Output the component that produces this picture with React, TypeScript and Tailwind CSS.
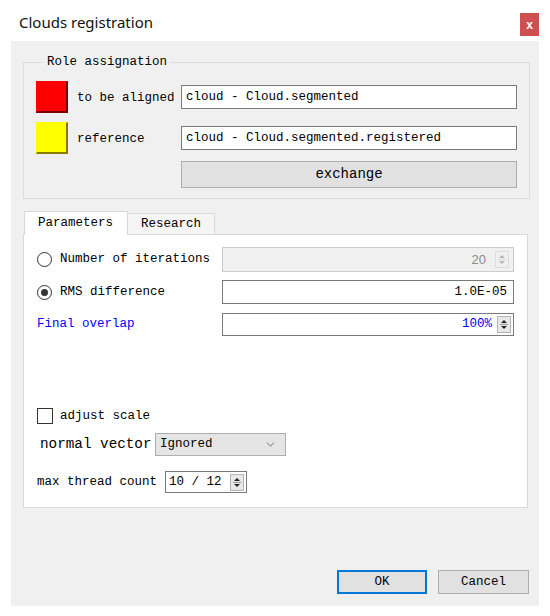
import { ChevronDown } from 'lucide-react';

const mono = "font-['Liberation_Mono',monospace] text-[12.5px]";

function SpinArrows({ disabled }: { disabled?: boolean }) {
  const c = disabled ? '#b5b5b5' : '#222';
  return (
    <div
      className={`flex h-[17px] w-[14px] flex-col items-center justify-center border ${
        disabled ? 'border-[#dcdcdc] bg-[#f0f0f0]' : 'border-[#b5b5b5] bg-[#e8e8e8]'
      }`}
    >
      <svg width="8" height="13" viewBox="0 0 8 13">
        <path d="M1 5 L4 2 L7 5 Z" fill={c} />
        <line x1="0" y1="6.5" x2="8" y2="6.5" stroke={disabled ? '#d8d8d8' : '#9a9a9a'} />
        <path d="M1 8 L4 11 L7 8 Z" fill={c} />
      </svg>
    </div>
  );
}

function ColorSwatch({ color, dark }: { color: string; dark: string }) {
  return (
    <div
      className="h-[32px] w-[32px] border-b-2 border-r-2 border-l border-t"
      style={{ background: color, borderBottomColor: dark, borderRightColor: dark, borderTopColor: color, borderLeftColor: color }}
    />
  );
}

function Radio({ checked }: { checked?: boolean }) {
  return (
    <div className="flex h-[15px] w-[15px] items-center justify-center rounded-full border border-[#333] bg-white">
      {checked && <div className="h-[7px] w-[7px] rounded-full bg-[#333]" />}
    </div>
  );
}

export default function App() {
  return (
    <div className={`flex h-[616px] w-[550px] flex-col bg-white ${mono} text-black`}>
      {/* title bar */}
      <div className="flex h-[41px] items-start">
        <div className="ml-[19px] mt-[12px] font-['Noto_Sans',sans-serif] text-[15px] leading-[20px] text-[#111]">
          Clouds registration
        </div>
        <div className="ml-auto mr-[11px] mt-[13px] flex h-[23px] w-[19px] items-center justify-center bg-[#cd4f4f] font-['Liberation_Sans',sans-serif] text-[12px] font-bold text-white">
          x
        </div>
      </div>

      {/* body */}
      <div className="ml-[11px] flex h-[565px] w-[528px] flex-col bg-[#f0f0f0] pl-[12px] pr-[9px] pt-[13px]">
        <fieldset className="border border-[#dcdcdc] px-[12px] pb-[10px]">
          <legend className="ml-[8px] px-[3px] leading-[16px]">Role assignation</legend>
          <div className="mt-[11px] flex h-[32px] items-center">
            <ColorSwatch color="#ff0000" dark="#7a0000" />
            <div className="ml-[9px] w-[104px] pt-[2px]">to be aligned</div>
            <div className="flex h-[24px] flex-1 items-center border border-[#7a7a7a] bg-white pl-[4px]">
              cloud - Cloud.segmented
            </div>
          </div>
          <div className="mt-[9px] flex h-[32px] items-center">
            <ColorSwatch color="#ffff00" dark="#8a7a00" />
            <div className="ml-[9px] w-[104px] pt-[2px]">reference</div>
            <div className="flex h-[24px] flex-1 items-center border border-[#7a7a7a] bg-white pl-[4px]">
              cloud - Cloud.segmented.registered
            </div>
          </div>
          <div className="mt-[7px] flex">
            <div className="ml-[145px] flex h-[27px] flex-1 items-center justify-center border border-[#adadad] bg-[#e1e1e1] text-[14px]">
              exchange
            </div>
          </div>
        </fieldset>

        {/* tabs */}
        <div className="mt-[11px] flex h-[24px] items-end pl-[1px]">
          <div className="relative z-10 -mb-px flex h-[24px] w-[104px] items-center border border-b-0 border-[#d9d9d9] bg-white pl-[13px]">
            Parameters
          </div>
          <div className="flex h-[21px] w-[87px] items-center border border-l-0 border-b-0 border-[#d9d9d9] bg-[#f5f5f5] pl-[13px]">
            Research
          </div>
        </div>
        <div className="mr-[2px] flex h-[274px] flex-col border border-[#d9d9d9] bg-white pr-[13px] pt-[12px]">
          <div className="flex h-[25px] items-center">
            <div className="ml-[13px]">
              <Radio />
            </div>
            <div className="ml-[8px] w-[162px]">Number of iterations</div>
            <div className="flex h-[25px] flex-1 items-center justify-end border border-[#cccccc] bg-[#f0f0f0] pr-[4px] font-['Liberation_Sans',sans-serif] text-[13px] text-[#8a8a8a]">
              <span className="mr-[9px]">20</span>
              <SpinArrows disabled />
            </div>
          </div>
          <div className="mt-[8px] flex h-[24px] items-center">
            <div className="ml-[13px]">
              <Radio checked />
            </div>
            <div className="ml-[8px] w-[162px]">RMS difference</div>
            <div className="flex h-[24px] flex-1 items-center justify-end border border-[#7a7a7a] bg-white pr-[6px]">
              1.0E-05
            </div>
          </div>
          <div className="mt-[9px] flex h-[23px] items-center">
            <div className="ml-[13px] w-[185px] text-[#0000ff]">Final overlap</div>
            <div className="flex h-[23px] flex-1 items-center justify-end border border-[#7a7a7a] bg-white pr-[2px]">
              <span className="mr-[5px] text-[#0000ff]">100%</span>
              <SpinArrows />
            </div>
          </div>

          <div className="mt-[72px] flex h-[16px] items-center">
            <div className="ml-[13px] h-[16px] w-[16px] border border-[#333] bg-white" />
            <div className="ml-[7px]">adjust scale</div>
          </div>
          <div className="mt-[9px] flex h-[23px] items-center">
            <div className="ml-[16px] w-[115px] text-[14.3px]">normal vector</div>
            <div className="flex h-[23px] w-[131px] items-center border border-[#adadad] bg-[#e5e5e5] pl-[4px] pr-[8px]">
              <span className="flex-1">Ignored</span>
              <ChevronDown className="h-[13px] w-[13px] text-[#555]" strokeWidth={1.5} />
            </div>
          </div>
          <div className="mt-[15px] flex h-[22px] items-center">
            <div className="ml-[13px] w-[128px]">max thread count</div>
            <div className="flex h-[22px] w-[82px] items-center border border-[#7a7a7a] bg-white pl-[3px] pr-[2px]">
              <span className="flex-1">10 / 12</span>
              <SpinArrows />
            </div>
          </div>
        </div>

        <div className="flex-1" />
        <div className="mb-[12px] flex justify-end gap-[11px] pr-[1px]">
          <div className="flex h-[24px] w-[90px] items-center justify-center border-2 border-[#0078d7] bg-[#e1e1e1]">
            OK
          </div>
          <div className="flex h-[24px] w-[91px] items-center justify-center border border-[#adadad] bg-[#e1e1e1]">
            Cancel
          </div>
        </div>
      </div>
    </div>
  );
}
